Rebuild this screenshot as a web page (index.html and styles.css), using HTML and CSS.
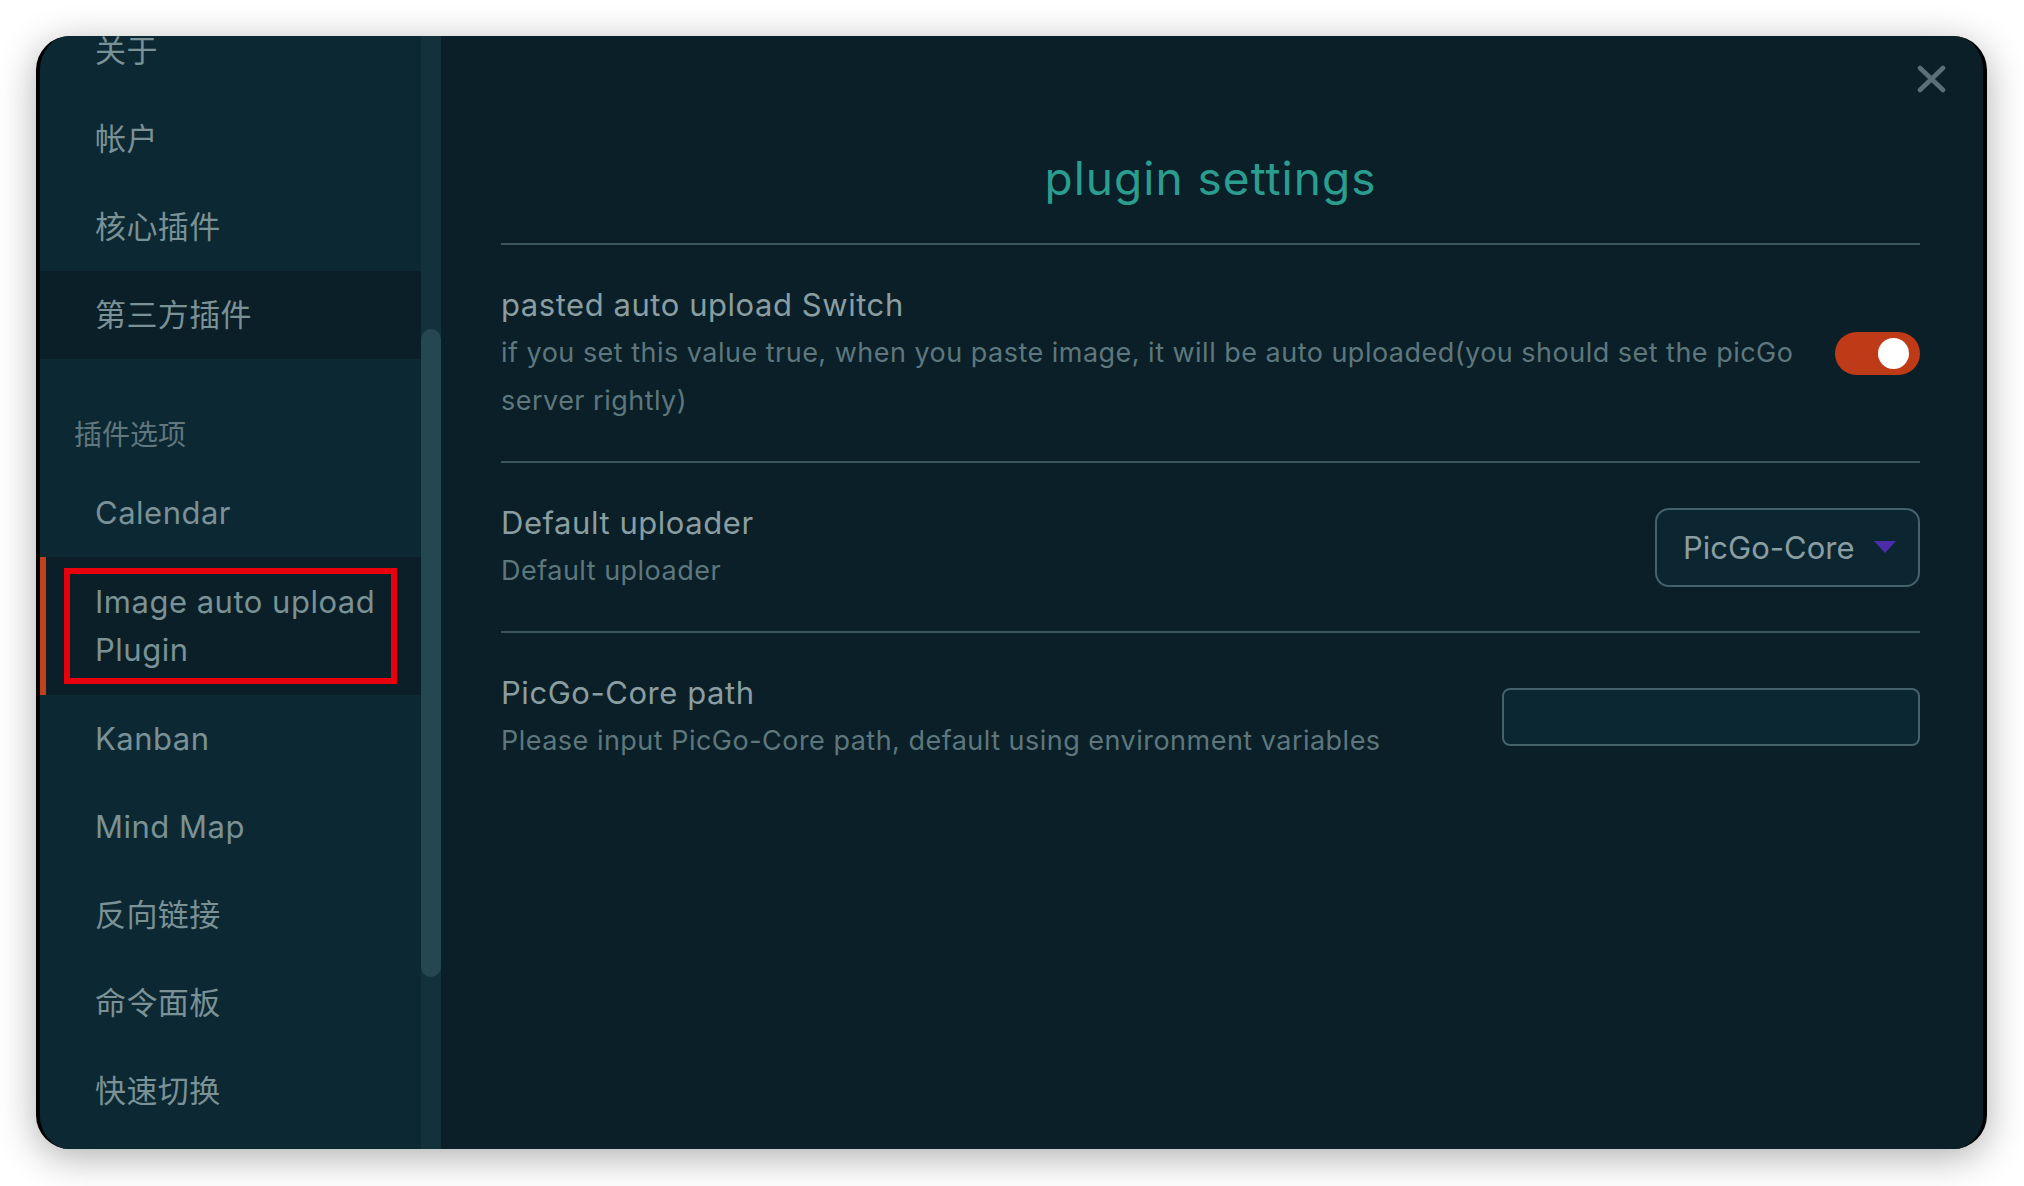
FILE: index.html
```html
<!DOCTYPE html>
<html lang="zh">
<head>
<meta charset="utf-8">
<title>plugin settings</title>
<link rel="stylesheet" href="styles.css">
</head>
<body>
<div class="window">
  <aside class="sidebar">
    <nav class="nav">
      <div class="nav-item">关于</div>
      <div class="nav-item">帐户</div>
      <div class="nav-item">核心插件</div>
      <div class="nav-item selected">第三方插件</div>
      <div class="nav-header">插件选项</div>
      <div class="nav-item latin">Calendar</div>
      <div class="nav-item latin active">Image auto upload Plugin<span class="annot"></span></div>
      <div class="nav-item latin">Kanban</div>
      <div class="nav-item latin">Mind Map</div>
      <div class="nav-item">反向链接</div>
      <div class="nav-item">命令面板</div>
      <div class="nav-item">快速切换</div>
    </nav>
  </aside>
  <div class="scroll-track"><div class="scroll-thumb"></div></div>
  <main class="content">
    <button class="close" aria-label="close">
      <svg viewBox="0 0 29 28" width="29" height="28"><path d="M3 3 L26 25 M26 3 L3 25" stroke="#5a7078" stroke-width="4.6" stroke-linecap="round" fill="none"/></svg>
    </button>
    <h1 class="title">plugin settings</h1>
    <div class="setting">
      <div class="info">
        <div class="name">pasted auto upload Switch</div>
        <div class="desc">if you set this value true, when you paste image, it will be auto uploaded(you should set the picGo server rightly)</div>
      </div>
      <div class="toggle"><span class="knob"></span></div>
    </div>
    <div class="setting">
      <div class="info">
        <div class="name">Default uploader</div>
        <div class="desc">Default uploader</div>
      </div>
      <div class="select"><span class="select-text">PicGo-Core</span><span class="caret"></span></div>
    </div>
    <div class="setting last">
      <div class="info">
        <div class="name">PicGo-Core path</div>
        <div class="desc">Please input PicGo-Core path, default using environment variables</div>
      </div>
      <div class="input"></div>
    </div>
  </main>
</div>
</body>
</html>
```

FILE: styles.css
```css
* { box-sizing: border-box; }

html, body {
  margin: 0;
  background: #ffffff;
}

body {
  width: 2024px;
  height: 1186px;
  padding: 36px 37px 37px 36px;
  font-family: Inter, "Noto Sans CJK SC", sans-serif;
  overflow: hidden;
}

.window {
  width: 1951px;
  height: 1113px;
  display: flex;
  border-radius: 34px;
  overflow: hidden;
  background: #0a1f28;
  border-left: 4px solid #000;
  border-right: 4px solid #000;
  box-shadow: 0 8px 38px rgba(0, 0, 0, 0.32);
}

.sidebar {
  width: 381px;
  flex-shrink: 0;
  background: #0c2833;
  overflow: hidden;
}

.nav {
  margin-top: -29px;
  display: flex;
  flex-direction: column;
}

.nav-item {
  position: relative;
  padding: 20px 20px 20px 55px;
  font-size: 31px;
  line-height: 48px;
  color: #7a9196;
  letter-spacing: 0.4px;
}

.nav-item.latin {
  letter-spacing: 0.5px;
}

.nav-item.selected {
  background: #0a1f28;
}

.nav-item.active {
  background: #0a1f28;
  padding-top: 21px;
  padding-bottom: 21px;
  box-shadow: inset 6px 0 0 #c0411b;
}

.annot {
  position: absolute;
  left: 24px;
  top: 11px;
  width: 333px;
  height: 116px;
  border: 6px solid #e8000d;
}

.nav-header {
  padding: 60px 24px 18px 34px;
  font-size: 28px;
  line-height: 32px;
  color: #5f777d;
}

.scroll-track {
  width: 20px;
  flex-shrink: 0;
  background: #12313a;
  padding-top: 293px;
}

.scroll-thumb {
  height: 648px;
  border-radius: 10px;
  background: #254850;
}

.content {
  position: relative;
  flex: 1;
  padding: 0 63px 0 60px;
  background: #0a1f28;
}

.close {
  position: absolute;
  top: 29px;
  right: 37px;
  width: 29px;
  height: 28px;
  padding: 0;
  border: 0;
  background: transparent;
  display: block;
}

.close svg { display: block; }

.title {
  margin: 0;
  padding: 115px 0 38px;
  border-bottom: 2px solid #3b555d;
  text-align: center;
  font-size: 46px;
  line-height: 54px;
  font-weight: 400;
  letter-spacing: 1px;
  color: #2a9d8f;
}

.setting {
  display: flex;
  align-items: center;
  gap: 30px;
  padding: 36px 0;
  border-bottom: 2px solid #3b555d;
}

.setting.last {
  border-bottom: 0;
}

.info {
  flex: 1;
  min-width: 0;
}

.name {
  font-size: 31px;
  line-height: 48px;
  letter-spacing: 0.55px;
  color: #8a9ea2;
}

.desc {
  font-size: 27px;
  line-height: 48px;
  letter-spacing: 0.48px;
  color: #5e777d;
}

.toggle {
  flex-shrink: 0;
  width: 85px;
  height: 43px;
  border-radius: 22px;
  background: #bf3a17;
  display: flex;
  align-items: center;
  justify-content: flex-end;
  padding-right: 11px;
}

.knob {
  width: 31px;
  height: 31px;
  border-radius: 50%;
  background: #ffffff;
}

.select {
  flex-shrink: 0;
  width: 265px;
  height: 79px;
  border: 2px solid #45616a;
  border-radius: 14px;
  background: #0b2631;
  display: flex;
  align-items: center;
  justify-content: space-between;
  padding: 0 22px 0 26px;
}

.select-text {
  font-size: 31px;
  white-space: nowrap;
  color: #8a9ea2;
}

.caret {
  flex-shrink: 0;
  width: 0;
  height: 0;
  border-left: 11px solid transparent;
  border-right: 11px solid transparent;
  border-top: 12px solid #4b2dab;
}

.input {
  flex-shrink: 0;
  width: 418px;
  height: 58px;
  border: 2px solid #45616a;
  border-radius: 8px;
  background: #0b2832;
}
```
